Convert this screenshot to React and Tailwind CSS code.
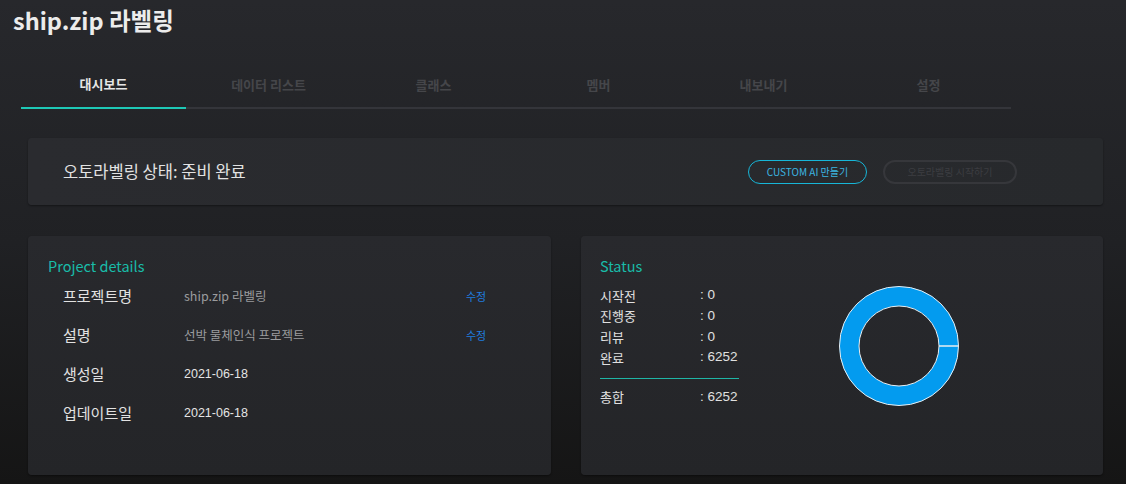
import React from 'react';

const tabs = ['대시보드', '데이터 리스트', '클래스', '멤버', '내보내기', '설정'];

const details = [
  { label: '프로젝트명', value: 'ship.zip 라벨링', muted: true, edit: true },
  { label: '설명', value: '선박 물체인식 프로젝트', muted: true, edit: true },
  { label: '생성일', value: '2021-06-18' },
  { label: '업데이트일', value: '2021-06-18' },
];

const counts = [
  { label: '시작전', value: '0' },
  { label: '진행중', value: '0' },
  { label: '리뷰', value: '0' },
  { label: '완료', value: '6252' },
];

const kr = { fontFamily: '"Noto Sans CJK KR", "Noto Sans", sans-serif' };
const num = { fontFamily: '"Liberation Sans", "Noto Sans CJK KR", sans-serif' };

function Donut() {
  return (
    <svg width="124" height="124" viewBox="0 0 124 124">
      <circle cx="62" cy="62" r="49.75" fill="none" stroke="#039bef" strokeWidth="19.5" />
      <circle cx="62" cy="62" r="59.5" fill="none" stroke="#e8eef2" strokeWidth="1" />
      <circle cx="62" cy="62" r="40" fill="none" stroke="#e8eef2" strokeWidth="1" />
      <line x1="102" y1="62" x2="121.5" y2="62" stroke="#e8eef2" strokeWidth="1.5" />
    </svg>
  );
}

export default function App() {
  return (
    <div
      className="w-full h-[484px] overflow-hidden bg-gradient-to-b from-[#27282c] via-[#202124] to-[#151515] text-[#e4e4e4]"
      style={kr}
    >
      {/* header */}
      <h1 className="pl-[13px] pt-[5px] h-[60px] text-[23.5px] leading-[30px] font-bold text-[#ececec]">
        ship.zip 라벨링
      </h1>

      {/* tabs */}
      <div className="ml-[21px] w-[990px] flex border-b-2 border-[#34353a]">
        {tabs.map((t, i) => (
          <div
            key={t}
            className={
              i === 0
                ? 'flex-1 h-[49px] -mb-[2px] flex items-center justify-center text-[13px] font-bold text-[#e6e6e6] border-b-2 border-[#1ec8b6]'
                : 'flex-1 h-[49px] -mb-[2px] flex items-center justify-center text-[13px] font-bold text-[#45464a]'
            }
          >
            {t}
          </div>
        ))}
      </div>

      {/* auto labeling status */}
      <div className="mt-[29px] ml-[28px] w-[1075px] h-[67px] rounded-[4px] bg-gradient-to-r from-[#2a2b2f] to-[#27292c] shadow-[0_1px_2px_rgba(0,0,0,0.4)] flex items-center pl-[35px] pr-[86px]">
        <div className="flex-1 text-[16.5px] text-[#e2e2e2]">오토라벨링 상태: 준비 완료</div>
        <button className="h-[24px] w-[119px] rounded-full border border-[#17b6d8] text-[10px] text-[#3cb6e2] flex items-center justify-center">
          CUSTOM AI 만들기
        </button>
        <button className="ml-[16px] h-[24px] w-[134px] rounded-full border-2 border-[#36373b] text-[10px] text-[#3c3d41] flex items-center justify-center">
          오토라벨링 시작하기
        </button>
      </div>

      {/* bottom cards */}
      <div className="mt-[31px] ml-[28px] flex gap-[30px]">
        <div className="w-[523px] h-[239px] rounded-[4px] bg-gradient-to-b from-[#28292d] to-[#242528] shadow-[0_1px_2px_rgba(0,0,0,0.4)] pt-[20px] pl-[20px]">
          <div className="text-[14.5px] leading-[20px] text-[#19bca9]">Project details</div>
          <div className="mt-[1px] pl-[15px]">
            {details.map((d) => (
              <div key={d.label} className="h-[39px] flex items-center">
                <div className="w-[121px] text-[15px] text-[#e2e2e2]">{d.label}</div>
                <div
                  className={
                    d.muted
                      ? 'w-[282px] text-[12.5px] text-[#9b9c9e]'
                      : 'w-[282px] text-[12.5px] text-[#e4e4e4]'
                  }
                  style={d.muted ? kr : num}
                >
                  {d.value}
                </div>
                {d.edit && <div className="text-[11px] text-[#1f7fe0]">수정</div>}
              </div>
            ))}
          </div>
        </div>

        <div className="w-[522px] h-[239px] rounded-[4px] bg-gradient-to-b from-[#28292d] to-[#242528] shadow-[0_1px_2px_rgba(0,0,0,0.4)] pt-[20px] pl-[19px] flex">
          <div className="w-[140px]">
            <div className="text-[14.5px] leading-[20px] text-[#19bca9]">Status</div>
            <div className="mt-[9px]">
              {counts.map((c) => (
                <div key={c.label} className="h-[20.7px] flex items-center text-[13px] text-[#e0e0e0]">
                  <div className="w-[100px]">{c.label}</div>
                  <div className="text-[13.5px]" style={num}>: {c.value}</div>
                </div>
              ))}
            </div>
            <div className="mt-[10px] h-px w-[139px] bg-[#1fb5a6]" />
            <div className="mt-[8px] h-[20px] flex items-center text-[13px] text-[#e0e0e0]">
              <div className="w-[100px]">총합</div>
              <div className="text-[13.5px]" style={num}>: 6252</div>
            </div>
          </div>
          <div className="ml-[97px] mt-[28px]">
            <Donut />
          </div>
        </div>
      </div>
    </div>
  );
}
